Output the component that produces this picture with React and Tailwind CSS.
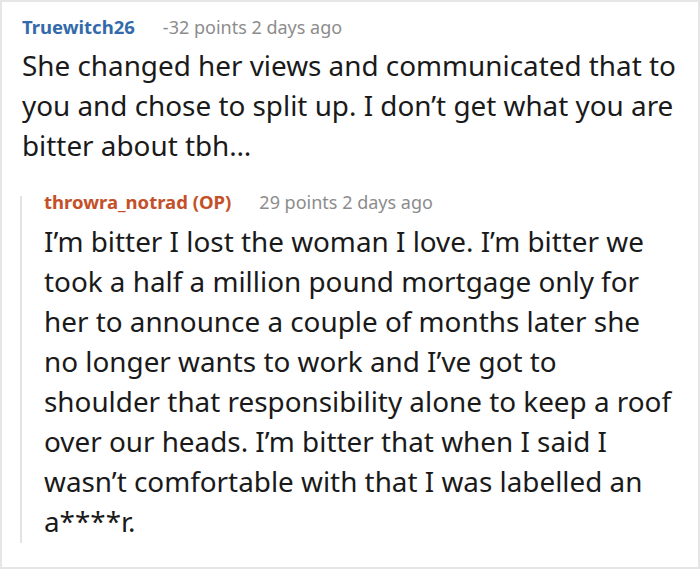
const parent = {
  author: 'Truewitch26',
  points: '-32 points',
  time: '2 days ago',
  body: 'She changed her views and communicated that to you and chose to split up. I don’t get what you are bitter about tbh…',
}

const reply = {
  author: 'throwra_notrad (OP)',
  points: '29 points',
  time: '2 days ago',
  body: 'I’m bitter I lost the woman I love. I’m bitter we took a half a million pound mortgage only for her to announce a couple of months later she no longer wants to work and I’ve got to shoulder that responsibility alone to keep a roof over our heads. I’m bitter that when I said I wasn’t comfortable with that I was labelled an a****r.',
}

function Meta({ comment, color }) {
  return (
    <div className="flex items-baseline text-[18px] leading-[24px]">
      <span className={`text-[18.5px] font-bold ${color}`}>{comment.author}</span>
      <span className="ml-[28px] text-[#8c8c8c]">
        {comment.points} {comment.time}
      </span>
    </div>
  )
}

export default function App() {
  return (
    <div
      className="h-[569px] w-[700px] border-2 border-[#e6e6e6] bg-white"
      style={{ fontFamily: '"Noto Sans", "Open Sans", sans-serif' }}
    >
      <div className="pl-[20px] pr-[22px] pt-[13px]">
        <Meta comment={parent} color="text-[#336aaa]" />
        <p className="mt-[6px] text-[27.85px] leading-[40px] text-[#1a1a1a]">
          {parent.body}
        </p>

        <div className="-ml-[2px] mt-[25px] flex">
          <div className="mt-[6px] w-[2px] shrink-0 bg-[#e3e3e3]" />
          <div className="pb-[2px] pl-[22px]">
            <Meta comment={reply} color="text-[#c4502a]" />
            <p className="mt-[7px] text-[27.85px] leading-[40px] text-[#1a1a1a]">
              {reply.body}
            </p>
          </div>
        </div>
      </div>
    </div>
  )
}
